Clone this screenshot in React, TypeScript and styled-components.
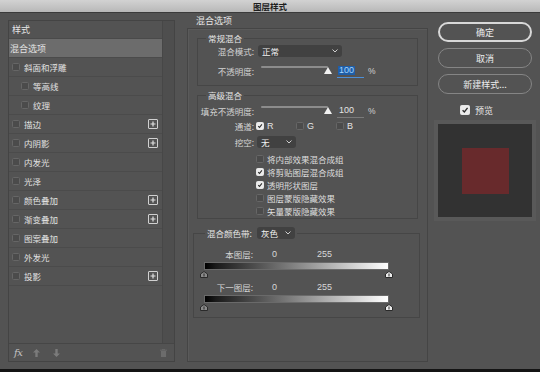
import React from "react";
import styled, { createGlobalStyle } from "styled-components";

const Global = createGlobalStyle`
  html, body { margin: 0; padding: 0; background: #535353; }
  body {
    font-family: "Noto Sans CJK SC", "Noto Sans", "Liberation Sans", sans-serif;
    color: #dcdcdc;
    font-size: 8.5px;
  }
  * { box-sizing: border-box; }
`;

const Window = styled.div`
  width: 540px;
  height: 372px;
  display: flex;
  flex-direction: column;
  overflow: hidden;
  background: #535353;
`;

const TitleBar = styled.div`
  height: 13px;
  flex: none;
  background: linear-gradient(#d2d2d2, #b8b8b8);
  border-bottom: 1px solid #3b3b3b;
  color: #1e1e1e;
  font-size: 8.5px;
  line-height: 12.5px;
  text-align: center;
  font-weight: 700;
`;

const Main = styled.div`
  flex: 1;
  display: flex;
  align-items: flex-start;
  padding: 7px 8px 0;
`;

const BottomStrip = styled.div`
  height: 3px;
  flex: none;
  background: #141414;
`;

/* ---------- left ---------- */
const LeftPanel = styled.div`
  width: 167px;
  height: 342px;
  flex: none;
  display: flex;
  flex-direction: column;
  border: 1px solid #444;
`;

const ListArea = styled.div`
  flex: 1;
  display: flex;
  min-height: 0;
  border-bottom: 1px solid #464646;
`;

const List = styled.div`
  flex: 1;
  display: flex;
  flex-direction: column;
`;

const ScrollTrack = styled.div`
  width: 12px;
  flex: none;
  background: #4e4e4e;
  border-left: 1px solid #474747;
`;

const ListHeader = styled.div`
  height: 18px;
  flex: none;
  display: flex;
  align-items: center;
  padding-left: 3px;
  border-bottom: 1px solid #4a4a4a;
  color: #e6e6e6;
  font-size: 9px;
`;

const StyleRow = styled.div<{ $active?: boolean; $indent?: boolean }>`
  height: 19px;
  flex: none;
  display: flex;
  align-items: center;
  gap: 4px;
  padding-left: ${(p) => (p.$active ? 1 : p.$indent ? 12 : 3)}px;
  padding-right: 4px;
  background: ${(p) => (p.$active ? "#6c6c6c" : "transparent")};
  border-bottom: 1px solid #4b4b4b;
  color: #e2e2e2;
  font-size: ${(p) => (p.$active ? 9 : 8.5)}px;
`;

const RowLabel = styled.span`
  flex: 1;
  white-space: nowrap;
`;

const PlusButton = styled.span`
  width: 10px;
  height: 10px;
  flex: none;
  border: 1px solid #d0d0d0;
  border-radius: 1px;
  display: flex;
  align-items: center;
  justify-content: center;
`;

const Toolbar = styled.div`
  height: 17px;
  flex: none;
  display: flex;
  align-items: center;
  padding: 0 7px 0 5px;
`;

const ToolSlot = styled.span<{ $ml?: number; $push?: boolean }>`
  display: flex;
  align-items: center;
  margin-left: ${(p) => (p.$push ? "auto" : `${p.$ml ?? 0}px`)};
`;

const FxText = styled.span`
  font-family: "DejaVu Serif", "Liberation Serif", serif;
  font-style: italic;
  font-size: 10px;
  line-height: 10px;
  color: #c4c4c4;
  letter-spacing: -0.5px;
`;

/* ---------- shared ---------- */
const Box = styled.span<{ $checked?: boolean; $size?: number }>`
  width: ${(p) => p.$size ?? 8}px;
  height: ${(p) => p.$size ?? 8}px;
  flex: none;
  border-radius: 1.5px;
  border: 1px solid ${(p) => (p.$checked ? "#e6e6e6" : "#666")};
  background: ${(p) => (p.$checked ? "#ececec" : "#4b4b4b")};
  display: flex;
  align-items: center;
  justify-content: center;
`;

const Check = ({ checked, size }: { checked?: boolean; size?: number }) => (
  <Box $checked={checked} $size={size}>
    {checked && (
      <svg width="100%" height="100%" viewBox="0 0 10 10">
        <polyline points="2,5.2 4.2,7.4 8.2,2.4" fill="none" stroke="#2a2a2a" strokeWidth="1.7" />
      </svg>
    )}
  </Box>
);

const SelectBox = styled.div<{ $w: number }>`
  width: ${(p) => p.$w}px;
  height: 12px;
  flex: none;
  border-radius: 3px;
  background: #414141;
  display: flex;
  align-items: center;
  justify-content: space-between;
  padding: 0 4px;
  color: #f2f2f2;
  line-height: 12px;
`;

const Chevron = () => (
  <svg width="6" height="4" viewBox="0 0 6 4">
    <polyline points="0.5,0.5 3,3 5.5,0.5" fill="none" stroke="#cfcfcf" strokeWidth="1" />
  </svg>
);

const Select = ({ w, value }: { w: number; value: string }) => (
  <SelectBox $w={w}>
    <span>{value}</span>
    <Chevron />
  </SelectBox>
);

/* ---------- middle ---------- */
const MiddleColumn = styled.div`
  width: 241px;
  flex: none;
  margin-left: 12px;
  margin-top: -4px;
  display: flex;
  flex-direction: column;
`;

const PanelTitle = styled.div`
  height: 10px;
  line-height: 10px;
  padding-left: 9px;
  color: #e6e6e6;
  font-size: 9px;
`;

const OptionsBox = styled.div`
  margin-top: 2px;
  height: 334px;
  border: 1px solid #454545;
  box-shadow: inset 1px 1px 0 #5a5a5a;
  padding: 3px 9px 0;
  display: flex;
  flex-direction: column;
`;

const Group = styled.fieldset<{ $mt?: number; $pb?: number }>`
  margin: ${(p) => p.$mt ?? 0}px 0 0;
  padding: 0 0 ${(p) => p.$pb ?? 7}px;
  border: 1px solid #464646;
  min-width: 0;
`;

const BlendGroup = styled(Group)`
  margin: 7px -2px 0 -4px;
  padding-bottom: 6px;
`;

const Legend = styled.legend<{ $ml?: number; $h?: number }>`
  margin-left: ${(p) => p.$ml ?? 8}px;
  padding: 0 2px;
  height: ${(p) => p.$h ?? 12}px;
  line-height: ${(p) => p.$h ?? 12}px;
  color: #e6e6e6;
  display: flex;
  align-items: center;
  gap: 5px;
`;

const FieldRow = styled.div<{ $mt?: number }>`
  display: flex;
  align-items: center;
  height: 14px;
  margin-top: ${(p) => p.$mt ?? 0}px;
`;

const FieldLabel = styled.span<{ $w?: number; $mr?: number }>`
  width: ${(p) => p.$w ?? 56}px;
  margin-right: ${(p) => p.$mr ?? 4}px;
  flex: none;
  text-align: right;
  white-space: nowrap;
  color: #d4d4d4;
`;

const Slider = styled.div`
  position: relative;
  width: 71px;
  height: 14px;
  margin-left: 3px;
  flex: none;
`;

const Track = styled.div`
  position: absolute;
  left: 0;
  top: 2px;
  width: 67px;
  height: 2px;
  border-radius: 1px;
  background: #8c8c8c;
`;

const ThumbSvg = styled.svg`
  position: absolute;
  right: 0;
  top: 3px;
`;

const ValueField = styled.div<{ $focus?: boolean }>`
  width: 27px;
  height: 13px;
  margin-left: 5px;
  flex: none;
  display: flex;
  align-items: center;
  padding-left: 1px;
  border-bottom: 1px solid ${(p) => (p.$focus ? "#4d8fd8" : "#7a7a7a")};
`;

const ValueText = styled.span<{ $focus?: boolean }>`
  line-height: 9px;
  padding: 0 1px;
  background: ${(p) => (p.$focus ? "#1f5ea8" : "transparent")};
  color: ${(p) => (p.$focus ? "#a4d6ff" : "#e4e4e4")};
  font-family: "Liberation Sans", "Noto Sans", sans-serif;
  font-size: 9px;
`;

const Percent = styled.span`
  margin-left: 4px;
  color: #d2d2d2;
  font-family: "Liberation Sans", sans-serif;
`;

const Latin = styled.span`
  font-family: "Liberation Sans", "Noto Sans", sans-serif;
  font-size: 9px;
  color: #e4e4e4;
`;

const ChannelItem = styled.span`
  width: 40px;
  flex: none;
  display: flex;
  align-items: center;
  gap: 3px;
`;

const CheckList = styled.div`
  margin-top: 3px;
  padding-left: 58px;
  display: flex;
  flex-direction: column;
`;

const CheckLine = styled.div`
  height: 13px;
  display: flex;
  align-items: center;
  gap: 3px;
  white-space: nowrap;
  color: #dedede;
`;

const LevelValue = styled.span<{ $w?: number; $ml?: number }>`
  width: ${(p) => p.$w ?? 45}px;
  margin-left: ${(p) => p.$ml ?? 0}px;
  flex: none;
  font-family: "Liberation Sans", sans-serif;
  font-size: 9px;
  color: #d8d8d8;
`;

const GradientWrap = styled.div`
  position: relative;
  width: 185px;
  height: 16px;
  margin: 1px 0 0 10px;
`;

const GradientBar = styled.div`
  height: 8px;
  border: 1px solid #6a6a6a;
  background: linear-gradient(90deg, #000 0%, #1a1a1a 6%, #fff 100%);
`;

const Marker = styled.svg<{ $side: "left" | "right" }>`
  position: absolute;
  top: 9px;
  ${(p) => (p.$side === "left" ? "left: -4px;" : "right: -4px;")}
`;

const MarkerIcon = ({ side, light }: { side: "left" | "right"; light?: boolean }) => (
  <Marker $side={side} width="8" height="7" viewBox="0 0 8 7">
    <polygon points="4,0.5 7.5,3 7.5,6.5 0.5,6.5 0.5,3" fill={light ? "#ececec" : "#8a8a8a"} stroke="#2a2a2a" strokeWidth="1" />
    <line x1="4" y1="2.5" x2="4" y2="5.5" stroke="#2a2a2a" strokeWidth="1" />
  </Marker>
);

/* ---------- right ---------- */
const RightColumn = styled.div`
  width: 94px;
  flex: none;
  margin-left: 10px;
  padding-top: 2px;
  display: flex;
  flex-direction: column;
`;

const DialogButton = styled.button<{ $primary?: boolean }>`
  height: 20px;
  padding: 0;
  border-radius: 10px;
  background: transparent;
  border: ${(p) => (p.$primary ? "2px solid #d8d8d8" : "1px solid #858585")};
  color: #ededed;
  font: inherit;
  font-size: 9px;
  & + & { margin-top: 6px; }
`;

const PreviewToggle = styled.div`
  margin-top: 10px;
  height: 12px;
  display: flex;
  align-items: center;
  gap: 5px;
  padding-left: 22px;
  color: #e6e6e6;
  font-size: 9px;
`;

const PreviewCanvas = styled.div`
  margin-top: 8px;
  height: 93px;
  background: #323232;
  box-shadow: 0 0 0 4px #595959;
  display: flex;
  align-items: center;
  justify-content: center;
`;

const Swatch = styled.div`
  width: 47px;
  height: 46px;
  background: #682a2c;
`;

const PlusIcon = () => (
  <svg width="6" height="6" viewBox="0 0 6 6">
    <path d="M3 0.5V5.5M0.5 3H5.5" stroke="#e0e0e0" strokeWidth="1.2" />
  </svg>
);

type Item = { label: string; indent?: boolean; plus?: boolean };
const items: Item[] = [
  { label: "斜面和浮雕" },
  { label: "等高线", indent: true },
  { label: "纹理", indent: true },
  { label: "描边", plus: true },
  { label: "内阴影", plus: true },
  { label: "内发光" },
  { label: "光泽" },
  { label: "颜色叠加", plus: true },
  { label: "渐变叠加", plus: true },
  { label: "图案叠加" },
  { label: "外发光" },
  { label: "投影", plus: true },
];

const advChecks = [
  { label: "将内部效果混合成组", checked: false },
  { label: "将剪贴图层混合成组", checked: true },
  { label: "透明形状图层", checked: true },
  { label: "图层蒙版隐藏效果", checked: false },
  { label: "矢量蒙版隐藏效果", checked: false },
];

const OpacitySlider = () => (
  <Slider>
    <Track />
    <ThumbSvg width="8" height="7" viewBox="0 0 8 7">
      <polygon points="4,0 8,7 0,7" fill="#f2f2f2" />
    </ThumbSvg>
  </Slider>
);

export default function App() {
  return (
    <Window>
      <Global />
      <TitleBar>图层样式</TitleBar>
      <Main>
        <LeftPanel>
          <ListArea>
            <List>
              <ListHeader>样式</ListHeader>
              <StyleRow $active>
                <RowLabel>混合选项</RowLabel>
              </StyleRow>
              {items.map((it) => (
                <StyleRow key={it.label} $indent={it.indent}>
                  <Check />
                  <RowLabel>{it.label}</RowLabel>
                  {it.plus && (
                    <PlusButton>
                      <PlusIcon />
                    </PlusButton>
                  )}
                </StyleRow>
              ))}
            </List>
            <ScrollTrack />
          </ListArea>
          <Toolbar>
            <ToolSlot>
              <FxText>fx</FxText>
            </ToolSlot>
            <ToolSlot $ml={11}>
              <svg width="7" height="8" viewBox="0 0 7 8">
                <path d="M3.5 0L7 3.6H4.7V8H2.3V3.6H0Z" fill="#7b7b7b" />
              </svg>
            </ToolSlot>
            <ToolSlot $ml={13}>
              <svg width="7" height="8" viewBox="0 0 7 8">
                <path d="M3.5 8L7 4.4H4.7V0H2.3V4.4H0Z" fill="#7b7b7b" />
              </svg>
            </ToolSlot>
            <ToolSlot $push>
              <svg width="7" height="8" viewBox="0 0 7 8">
                <path d="M0 1.2H7M2.4 1.2V0.3H4.6V1.2" stroke="#6c6c6c" strokeWidth="0.9" fill="none" />
                <path d="M0.9 2H6.1V8H0.9Z" fill="#6c6c6c" />
              </svg>
            </ToolSlot>
          </Toolbar>
        </LeftPanel>

        <MiddleColumn>
          <PanelTitle>混合选项</PanelTitle>
          <OptionsBox>
            <Group>
              <Legend>常规混合</Legend>
              <FieldRow>
                <FieldLabel>混合模式:</FieldLabel>
                <Select w={84} value="正常" />
              </FieldRow>
              <FieldRow $mt={6}>
                <FieldLabel>不透明度:</FieldLabel>
                <OpacitySlider />
                <ValueField $focus>
                  <ValueText $focus>100</ValueText>
                </ValueField>
                <Percent>%</Percent>
              </FieldRow>
            </Group>

            <Group $mt={3} $pb={1}>
              <Legend>高级混合</Legend>
              <FieldRow $mt={3}>
                <FieldLabel>填充不透明度:</FieldLabel>
                <OpacitySlider />
                <ValueField>
                  <ValueText>100</ValueText>
                </ValueField>
                <Percent>%</Percent>
              </FieldRow>
              <FieldRow $mt={1}>
                <FieldLabel $mr={2}>通道:</FieldLabel>
                <ChannelItem>
                  <Check checked />
                  <Latin>R</Latin>
                </ChannelItem>
                <ChannelItem>
                  <Check />
                  <Latin>G</Latin>
                </ChannelItem>
                <ChannelItem>
                  <Check />
                  <Latin>B</Latin>
                </ChannelItem>
              </FieldRow>
              <FieldRow $mt={2}>
                <FieldLabel $mr={3}>挖空:</FieldLabel>
                <Select w={39} value="无" />
              </FieldRow>
              <CheckList>
                {advChecks.map((c) => (
                  <CheckLine key={c.label}>
                    <Check checked={c.checked} />
                    <span>{c.label}</span>
                  </CheckLine>
                ))}
              </CheckList>
            </Group>

            <BlendGroup>
              <Legend $ml={11} $h={14}>
                <span>混合颜色带:</span>
                <Select w={38} value="灰色" />
              </Legend>
              <FieldRow $mt={7}>
                <FieldLabel $w={59} $mr={0}>本图层:</FieldLabel>
                <LevelValue $ml={19}>0</LevelValue>
                <LevelValue>255</LevelValue>
              </FieldRow>
              <GradientWrap>
                <GradientBar />
                <MarkerIcon side="left" />
                <MarkerIcon side="right" light />
              </GradientWrap>
              <FieldRow $mt={2}>
                <FieldLabel $w={59} $mr={0}>下一图层:</FieldLabel>
                <LevelValue $ml={19}>0</LevelValue>
                <LevelValue>255</LevelValue>
              </FieldRow>
              <GradientWrap>
                <GradientBar />
                <MarkerIcon side="left" />
                <MarkerIcon side="right" light />
              </GradientWrap>
            </BlendGroup>
          </OptionsBox>
        </MiddleColumn>

        <RightColumn>
          <DialogButton $primary>确定</DialogButton>
          <DialogButton>取消</DialogButton>
          <DialogButton>新建样式...</DialogButton>
          <PreviewToggle>
            <Check checked size={10} />
            <span>预览</span>
          </PreviewToggle>
          <PreviewCanvas>
            <Swatch />
          </PreviewCanvas>
        </RightColumn>
      </Main>
      <BottomStrip />
    </Window>
  );
}
